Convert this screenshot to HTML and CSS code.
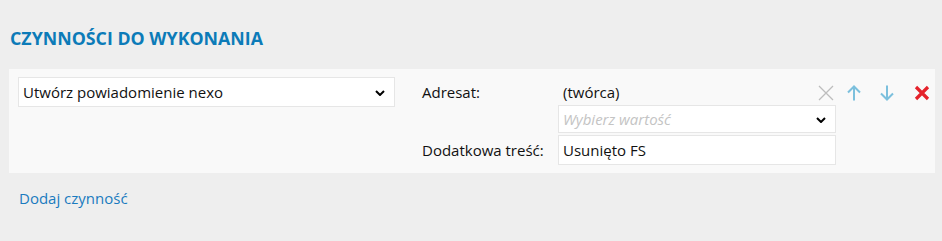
FILE: index.html
```html
<!DOCTYPE html>
<html lang="pl">
<head>
    <meta charset="UTF-8">
    <title>Czynności do wykonania</title>
    <link rel="stylesheet" href="styles.css">
</head>
<body>
    <h2 class="section-title">CZYNNOŚCI DO WYKONANIA</h2>

    <div class="action-row">
        <div class="select action-type">
            <span>Utwórz powiadomienie nexo</span>
            <svg class="chevron" viewBox="0 0 10 6" width="10" height="6"><path d="M1 1l4 4 4-4" fill="none" stroke="#000" stroke-width="2"/></svg>
        </div>

        <div class="fields">
            <div class="label label-top">Adresat:</div>
            <div class="value">
                <div class="value-text">
                    <span>(twórca)</span>
                    <svg class="clear" viewBox="0 0 16 16" width="16" height="16"><path d="M1 1l14 14M15 1L1 15" stroke="#bdbdbd" stroke-width="1.3"/></svg>
                </div>
                <div class="select small">
                    <span class="placeholder">Wybierz wartość</span>
                    <svg class="chevron" viewBox="0 0 10 6" width="10" height="6"><path d="M1 1l4 4 4-4" fill="none" stroke="#000" stroke-width="2"/></svg>
                </div>
            </div>

            <div class="label label-mid">Dodatkowa treść:</div>
            <div class="value">
                <div class="input">Usunięto FS</div>
            </div>
        </div>

        <div class="actions">
            <svg class="icon" viewBox="0 0 14 16" width="14" height="16"><path d="M7 15.5V2M1 7.5l6-6 6 6" fill="none" stroke="#7cc0dd" stroke-width="2"/></svg>
            <svg class="icon" viewBox="0 0 14 16" width="14" height="16"><path d="M7 0.5V14M1 8.5l6 6 6-6" fill="none" stroke="#7cc0dd" stroke-width="2"/></svg>
            <svg class="icon remove" viewBox="0 0 16 16" width="16" height="16"><path d="M2 2l12 12M14 2L2 14" stroke="#e5222b" stroke-width="3.2"/></svg>
        </div>
    </div>

    <a href="#" class="add-link">Dodaj czynność</a>
</body>
</html>
```

FILE: styles.css
```css
* {
    margin: 0;
    padding: 0;
    box-sizing: border-box;
}

body {
    background: #eeeeee;
    font-family: 'Open Sans', 'Noto Sans', sans-serif;
    font-size: 15px;
    color: #111;
    padding: 26px 7px 0 9px;
}

.section-title {
    font-size: 17.8px;
    line-height: 24px;
    font-weight: bold;
    color: #0c7bb8;
    margin-left: 1px;
    margin-bottom: 19px;
}

.action-row {
    display: flex;
    align-items: flex-start;
    background: #f9f9f9;
    padding: 8px 7px 8px 9px;
}

.select,
.input {
    display: flex;
    align-items: center;
    background: #fff;
    border: 1px solid #e6e6e6;
    height: 30px;
    padding: 0 9px 0 4px;
}

.select span {
    flex: 1;
}

.action-type {
    width: 377px;
    flex-shrink: 0;
}

.chevron {
    margin-top: 1px;
}

.fields {
    display: grid;
    grid-template-columns: 136px 278px;
    row-gap: 2px;
    margin-left: 27px;
    flex-shrink: 0;
}

.label-top {
    line-height: 30px;
}

.label-mid {
    align-self: center;
}

.value-text {
    display: flex;
    align-items: center;
    justify-content: space-between;
    height: 28px;
    padding: 2px 2px 0 5px;
}

.clear {
    margin-top: 2px;
}

.select.small {
    height: 28px;
}

.placeholder {
    color: #c4c4c4;
    font-style: italic;
}

.actions {
    display: flex;
    gap: 19px;
    margin-left: 11px;
    padding-top: 8px;
}

.remove {
    margin-left: 1px;
}

.add-link {
    display: block;
    margin: 15px 0 0 10px;
    color: #1a7bbf;
    text-decoration: none;
}
```
